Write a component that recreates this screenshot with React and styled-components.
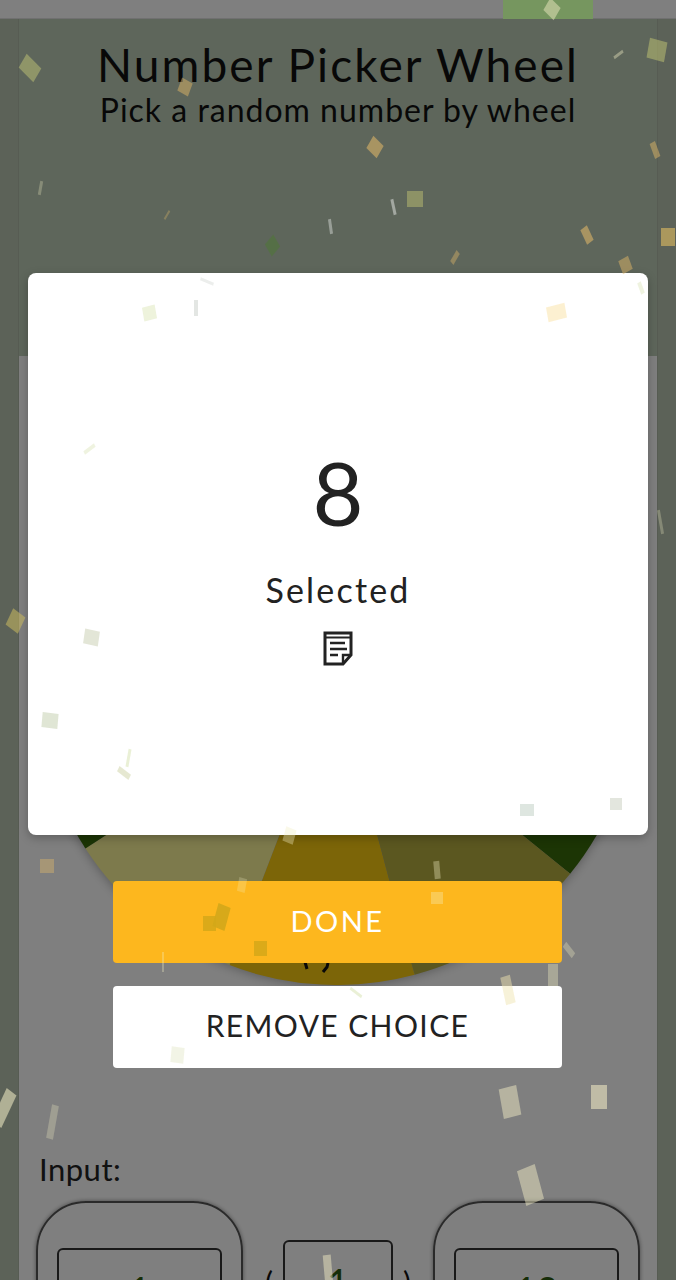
import React from 'react';
import styled, { createGlobalStyle } from 'styled-components';

const handFont = `'Lato', 'Noto Sans', sans-serif`;

const GlobalStyle = createGlobalStyle`
	html, body {
		margin: 0;
		padding: 0;
		background: #b6bfae;
	}
	* {
		box-sizing: border-box;
	}
`;

const StyledPage = styled.div`
	position: relative;
	width: 676px;
	height: 1280px;
	overflow: hidden;
	font-family: ${handFont};
	color: #111;
	background: #b8c4b0;
`;

const StyledTopBar = styled.div`
	height: 19px;
	background: #ffffff;
	border-bottom: 1px solid #e0e0e0;
`;

// the active tab stays lit above the dimmed page
const StyledTab = styled.div`
	position: absolute;
	top: 0;
	right: 83px;
	z-index: 1;
	width: 90px;
	height: 19px;
	background: #76965f;
`;

const StyledColumn = styled.main`
	width: 640px;
	margin: 0 18px;
	border-left: 1px solid #aeb8a6;
	border-right: 1px solid #aeb8a6;
`;

const StyledHeader = styled.header`
	height: 337px;
	padding-top: 22px;
	background: #bccdb6;
	text-align: center;
`;

const StyledTitle = styled.h1`
	margin: 0;
	font-size: 46px;
	line-height: 47px;
	font-weight: 400;
	letter-spacing: 2.1px;
`;

const StyledSubtitle = styled.h2`
	margin: 3px 0 0 0;
	font-size: 32px;
	line-height: 38px;
	font-weight: 400;
	letter-spacing: 1px;
`;

const StyledWheelPanel = styled.section`
	height: 924px;
	padding-top: 29px;
	background: #ffffff;
`;

const StyledWheel = styled.svg`
	display: block;
	width: 600px;
	height: 600px;
	margin-left: 18px;
	filter: drop-shadow(0 0 6px rgba(0, 0, 0, 0.35));
`;

const StyledInputLabel = styled.div`
	margin: 166px 0 0 20px;
	font-size: 31px;
	line-height: 36px;
	letter-spacing: 0.5px;
	color: #222;
`;

const StyledInputRow = styled.div`
	display: grid;
	grid-template-columns: 207px 1fr 207px;
	padding: 14px 17px 0 17px;
`;

const StyledBoundCard = styled.div`
	height: 200px;
	padding: 45px 19px 0 19px;
	border: 2px solid #555;
	border-radius: 50px;
	box-shadow: 0 0 4px rgba(0, 0, 0, 0.45);
`;

const StyledStepCell = styled.div`
	display: flex;
	justify-content: center;
	gap: 10px;
	padding-top: 39px;
	font-size: 30px;
`;

const StyledParen = styled.span`
	padding-top: 24px;
	line-height: 36px;
`;

const StyledField = styled.div`
	width: ${props => props.$width};
	height: 100px;
	padding-top: 18px;
	border: 2px solid #333;
	border-radius: 6px;
	text-align: center;
	font-size: 38px;
	line-height: 44px;
	color: #2c5a10;
`;

const StyledScrim = styled.div`
	position: absolute;
	inset: 0;
	background: rgba(0, 0, 0, 0.5);
`;

const StyledDialogLayer = styled.div`
	position: absolute;
	inset: 0;
	display: flex;
	flex-direction: column;
	align-items: center;
	padding-top: 273px;
`;

const StyledDialog = styled.div`
	width: 620px;
	height: 562px;
	padding-top: 167px;
	background: #ffffff;
	border-radius: 8px;
	box-shadow: 0 3px 10px rgba(0, 0, 0, 0.25);
	display: flex;
	flex-direction: column;
	align-items: center;
	color: #222;
`;

const StyledResult = styled.div`
	font-size: 88px;
	line-height: 104px;
`;

const StyledResultLabel = styled.div`
	margin-top: 24px;
	font-size: 34px;
	line-height: 44px;
	letter-spacing: 2.2px;
`;

const StyledNoteIcon = styled.svg`
	display: block;
	width: 30px;
	height: 36px;
	margin-top: 19px;
`;

const StyledActionButton = styled.button`
	display: block;
	width: 449px;
	height: 82px;
	margin: ${props => props.$top} 1px 0 0;
	padding: 0 0 4px 0;
	border: 0;
	border-radius: 4px;
	background: ${props => props.$primary ? '#fdb71e' : '#ffffff'};
	color: ${props => props.$primary ? '#ffffff' : '#222'};
	font-family: ${handFont};
	font-size: ${props => props.$primary ? '29px' : '30px'};
	letter-spacing: ${props => props.$primary ? '2.4px' : '1.4px'};
`;

const StyledConfettiLayer = styled.div`
	position: absolute;
	inset: 0;
	z-index: 2;
	opacity: 0.8;
	pointer-events: none;
`;

const StyledConfetti = styled.i.attrs(props => ({
	style: {
		left: props.$x - props.$w / 2,
		top: props.$y - props.$h / 2,
		width: props.$w,
		height: props.$h,
		transform: `rotate(${props.$rot}deg) skewY(${props.$rot / 2}deg)`,
		background: props.$color,
		opacity: props.$alpha
	}
}))`
	position: absolute;
	display: block;
`;

const ORANGE = '#f8ca10';
const KHAKI = '#faf498';
const DARK_GREEN = '#386a0a';
const OLIVE = '#b6ae40';

// slice 0 sits at the bottom, the rest follow clockwise
const SLICE_COLORS = [ORANGE, KHAKI, DARK_GREEN, OLIVE, ORANGE, KHAKI, DARK_GREEN, OLIVE, DARK_GREEN, OLIVE];

const WHEEL_RADIUS = 300;

function slicePath(index) {
	const start = (15 - index * 36) * Math.PI / 180;
	const end = (15 - (index + 1) * 36) * Math.PI / 180;
	const x1 = WHEEL_RADIUS + WHEEL_RADIUS * Math.sin(start);
	const y1 = WHEEL_RADIUS + WHEEL_RADIUS * Math.cos(start);
	const x2 = WHEEL_RADIUS + WHEEL_RADIUS * Math.sin(end);
	const y2 = WHEEL_RADIUS + WHEEL_RADIUS * Math.cos(end);
	return `M${WHEEL_RADIUS} ${WHEEL_RADIUS}L${x1} ${y1}A${WHEEL_RADIUS} ${WHEEL_RADIUS} 0 0 1 ${x2} ${y2}Z`;
}

const PAPER = '#f2edc4';
const AMBER = '#e2b868';
const MINT = '#dfe8c0';
const GREY = '#d8dcd8';

const CONFETTI = [
	[30, 68, 20, 16, 30, '#c4c878', 0.6],
	[185, 87, 12, 14, 20, AMBER, 0.6],
	[375, 147, 14, 14, 30, AMBER, 0.7],
	[415, 199, 16, 16, 0, '#b8bc70', 0.65],
	[330, 226, 3, 15, -8, GREY, 0.6],
	[393, 207, 3, 16, -12, GREY, 0.7],
	[272, 245, 13, 13, 40, '#4c7a30', 0.6],
	[40, 188, 3, 14, 10, PAPER, 0.35],
	[167, 215, 2, 10, 30, AMBER, 0.4],
	[455, 257, 12, 5, -40, AMBER, 0.5],
	[587, 235, 8, 16, -25, AMBER, 0.7],
	[625, 265, 11, 14, -20, AMBER, 0.6],
	[668, 237, 14, 18, 0, '#d8b860', 0.8],
	[655, 150, 6, 16, -20, AMBER, 0.6],
	[657, 50, 18, 20, 10, '#b8bc70', 0.7],
	[618, 54, 11, 3, -25, PAPER, 0.5],
	[552, 9, 14, 14, 30, PAPER, 0.6],
	[149, 313, 13, 14, -10, MINT, 0.7],
	[196, 308, 4, 16, 0, GREY, 0.9],
	[207, 281, 14, 3, 15, GREY, 0.6],
	[556, 312, 19, 15, -10, '#fbe8b8', 0.8],
	[641, 288, 4, 12, -20, MINT, 0.6],
	[89, 449, 13, 4, -25, MINT, 0.6],
	[91, 637, 15, 15, 8, '#d8dcc8', 0.9],
	[50, 720, 16, 15, 5, '#d4dcc4', 0.9],
	[128, 758, 3, 18, 10, MINT, 0.8],
	[124, 773, 14, 6, 25, '#d8dcb8', 0.8],
	[527, 810, 14, 12, 0, '#d0dcd4', 0.9],
	[616, 804, 12, 12, 0, '#d8dcd0', 0.9],
	[15, 621, 15, 18, 25, '#c8b860', 0.7],
	[289, 835, 11, 15, 15, PAPER, 0.45],
	[47, 866, 14, 14, 0, AMBER, 0.5],
	[242, 885, 8, 14, 10, PAPER, 0.3],
	[221, 917, 13, 24, 15, '#c8a418', 0.9],
	[209, 923, 13, 15, 0, '#c8a418', 0.8],
	[260, 948, 13, 15, 0, '#c8a418', 0.8],
	[437, 898, 12, 12, 0, '#f8e090', 0.6],
	[437, 870, 6, 18, -5, PAPER, 0.45],
	[569, 950, 14, 6, 35, PAPER, 0.4],
	[553, 975, 10, 22, 0, PAPER, 0.45],
	[163, 962, 2, 20, 0, PAPER, 0.4],
	[508, 990, 10, 28, -12, '#f0e4b0', 0.6],
	[356, 992, 14, 3, 25, MINT, 0.8],
	[177, 1055, 13, 16, 5, '#ecefd8', 0.8],
	[510, 1102, 18, 30, -10, PAPER, 0.6],
	[599, 1097, 16, 24, 0, PAPER, 0.7],
	[530, 1185, 19, 36, -15, PAPER, 0.6],
	[4, 1108, 12, 36, 25, PAPER, 0.7],
	[52, 1122, 7, 34, 10, PAPER, 0.35],
	[328, 1270, 8, 30, -5, PAPER, 0.6],
	[660, 522, 3, 24, -10, PAPER, 0.35]
];

function NoteIcon() {

	return (
		<StyledNoteIcon viewBox="0 0 30 36" fill="none" stroke="#222">
			<path d="M2 2H28V24L20 33H2Z" strokeWidth="3" strokeLinejoin="miter" />
			<path d="M2 6.5H28" strokeWidth="2" />
			<path d="M7 12H22M7 18H24M7 24H15" strokeWidth="2.4" />
			<path d="M20 33V24H28" strokeWidth="2.4" />
		</StyledNoteIcon>
	);

}

function App() {

	return (
		<StyledPage>
			<GlobalStyle />
			<StyledTopBar />
			<StyledColumn>
				<StyledHeader>
					<StyledTitle>Number Picker Wheel</StyledTitle>
					<StyledSubtitle>Pick a random number by wheel</StyledSubtitle>
				</StyledHeader>
				<StyledWheelPanel>
					<StyledWheel viewBox="0 0 600 600">
						{SLICE_COLORS.map((color, index) => (
							<path key={index} d={slicePath(index)} fill={color} />
						))}
						<path d="M268 577l2 7M291 578l-1 4l-4 5" stroke="#111" strokeWidth="3" fill="none" />
					</StyledWheel>
					<StyledInputLabel>Input:</StyledInputLabel>
					<StyledInputRow>
						<StyledBoundCard>
							<StyledField $width="100%">1</StyledField>
						</StyledBoundCard>
						<StyledStepCell>
							<StyledParen>(</StyledParen>
							<StyledField $width="110px">1</StyledField>
							<StyledParen>)</StyledParen>
						</StyledStepCell>
						<StyledBoundCard>
							<StyledField $width="100%">10</StyledField>
						</StyledBoundCard>
					</StyledInputRow>
				</StyledWheelPanel>
			</StyledColumn>
			<StyledScrim />
			<StyledTab />
			<StyledDialogLayer>
				<StyledDialog>
					<StyledResult>8</StyledResult>
					<StyledResultLabel>Selected</StyledResultLabel>
					<NoteIcon />
				</StyledDialog>
				<StyledActionButton $primary $top="46px">DONE</StyledActionButton>
				<StyledActionButton $top="23px">REMOVE CHOICE</StyledActionButton>
			</StyledDialogLayer>
			<StyledConfettiLayer>
				{CONFETTI.map(([x, y, w, h, rot, color, alpha], index) => (
					<StyledConfetti key={index} $x={x} $y={y} $w={w} $h={h} $rot={rot} $color={color} $alpha={alpha} />
				))}
			</StyledConfettiLayer>
		</StyledPage>
	);

}

export default App;
